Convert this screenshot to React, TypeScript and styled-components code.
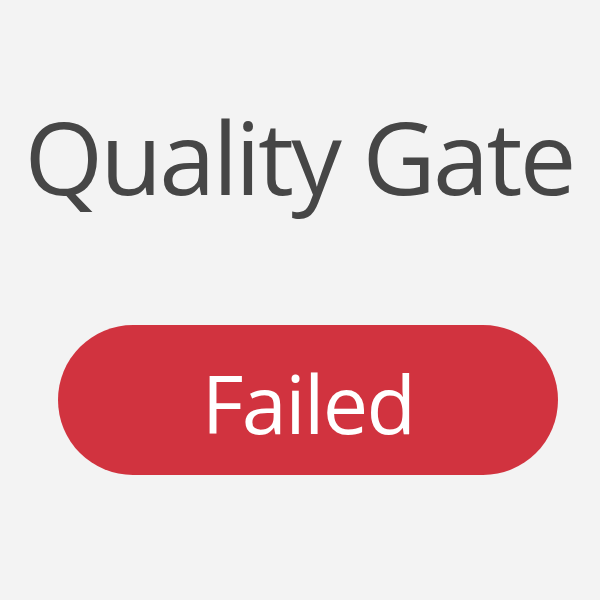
import React from "react";
import styled, { createGlobalStyle } from "styled-components";

const Global = createGlobalStyle`
  html, body { margin: 0; padding: 0; background: #f3f3f3; }
  body { font-family: "Open Sans", "Noto Sans", sans-serif; }
`;

const Page = styled.div`
  width: 600px;
  height: 600px;
  display: flex;
  flex-direction: column;
  align-items: center;
  background: #f3f3f3;
  box-sizing: border-box;
  padding-top: 86px;
`;

const Title = styled.h1`
  margin: 0 0 0 -2px;
  font-family: "Open Sans", "Noto Sans", sans-serif;
  font-weight: 400;
  font-size: 101px;
  line-height: 140px;
  color: #464646;
  letter-spacing: -2.8px;
  white-space: nowrap;
`;

const Badge = styled.div`
  box-sizing: border-box;
  margin-top: 99px;
  margin-left: 16px;
  width: 500px;
  height: 150px;
  padding-top: 5px;
  border-radius: 75px;
  background: #d1333f;
  display: flex;
  align-items: center;
  justify-content: center;
  color: #ffffff;
  font-family: "Open Sans", "Noto Sans", sans-serif;
  font-size: 81px;
  line-height: 1;
  letter-spacing: -1.7px;
`;

export default function App() {
  return (
    <>
      <Global />
      <Page>
        <Title>Quality Gate</Title>
        <Badge>Failed</Badge>
      </Page>
    </>
  );
}
